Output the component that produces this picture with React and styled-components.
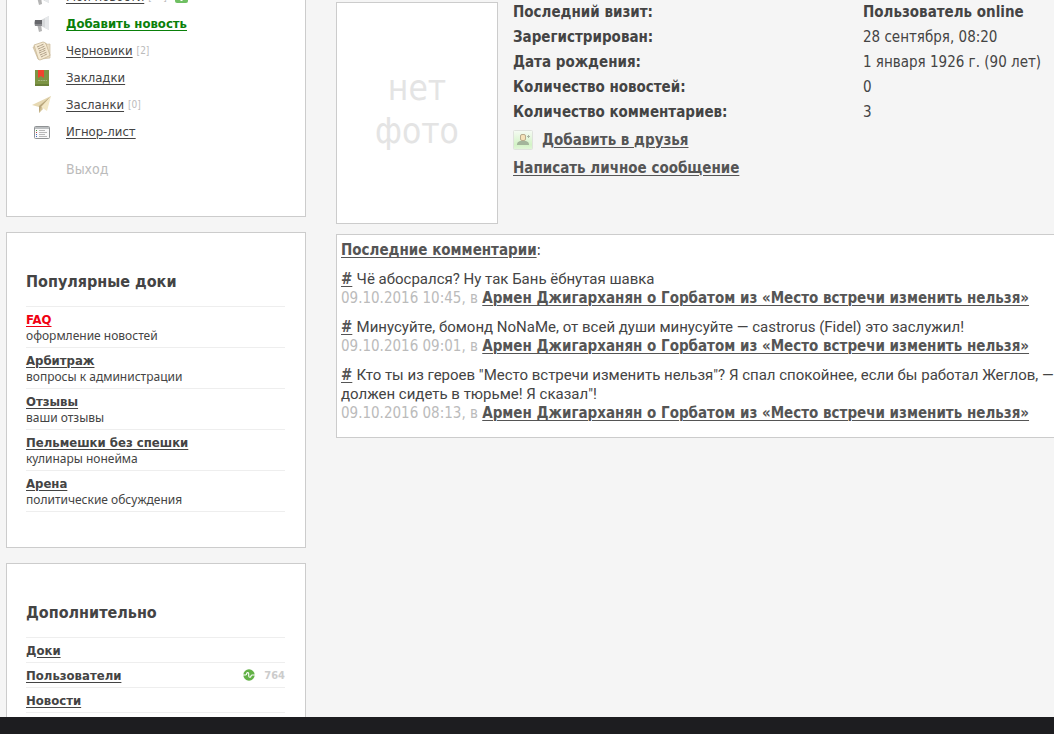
import styled, { createGlobalStyle } from "styled-components";

const menu = [
  { icon: <MegaphoneIcon />, name: "Мои новости", count: 30, plus: true },
  { icon: <MegaphoneIcon />, name: "Добавить новость", accent: true },
  { icon: <DraftsIcon />, name: "Черновики", count: 2 },
  { icon: <BookmarkIcon />, name: "Закладки" },
  { icon: <PlaneIcon />, name: "Засланки", count: 0 },
  { icon: <ListIcon />, name: "Игнор-лист" },
];

const docs = [
  { name: "FAQ", text: "оформление новостей", hot: true },
  { name: "Арбитраж", text: "вопросы к администрации" },
  { name: "Отзывы", text: "ваши отзывы" },
  { name: "Пельмешки без спешки", text: "кулинары нонейма" },
  { name: "Арена", text: "политические обсуждения" },
];

const extra = [
  { name: "Доки" },
  { name: "Пользователи", online: 764 },
  { name: "Новости" },
];

const profile = [
  ["Последний визит:", <b>Пользователь online</b>],
  ["Зарегистрирован:", "28 сентября, 08:20"],
  ["Дата рождения:", "1 января 1926 г. (90 лет)"],
  ["Количество новостей:", "0"],
  ["Количество комментариев:", "3"],
];

const topic = "Армен Джигарханян о Горбатом из «Место встречи изменить нельзя»";

const comments = [
  { date: "09.10.2016 10:45", lines: ["Чё абосрался? Ну так Бань ёбнутая шавка"] },
  {
    date: "09.10.2016 09:01",
    lines: ["Минусуйте, бомонд NoNaMe, от всей души минусуйте — castrorus (Fidel) это заслужил!"],
  },
  {
    date: "09.10.2016 08:13",
    lines: [
      'Кто ты из героев "Место встречи изменить нельзя"? Я спал спокойнее, если бы работал Жеглов, —',
      'должен сидеть в тюрьме! Я сказал"!',
    ],
  },
];

export default function App() {
  return (
    <>
      <GlobalStyle />
      <Page>
        <Content>
          <Sidebar>
            <UserCard>
              {menu.map((item) => (
                <MenuItem key={item.name}>
                  <MenuIcon>{item.icon}</MenuIcon>
                  <MenuLink href="#" $accent={item.accent}>
                    {item.name}
                  </MenuLink>
                  {item.count !== undefined && <Count>[{item.count}]</Count>}
                  {item.plus && <PlusIcon />}
                </MenuItem>
              ))}
              <Logout href="#">Выход</Logout>
            </UserCard>

            <Card>
              <CardTitle>Популярные доки</CardTitle>
              <List>
                {docs.map((doc) => (
                  <DocItem key={doc.name}>
                    <ListLink href="#" $hot={doc.hot}>
                      {doc.name}
                    </ListLink>
                    <DocText>{doc.text}</DocText>
                  </DocItem>
                ))}
              </List>
            </Card>

            <Card>
              <CardTitle>Дополнительно</CardTitle>
              <List>
                {extra.map((item) => (
                  <ExtraItem key={item.name}>
                    <ListLink href="#">{item.name}</ListLink>
                    {item.online && (
                      <Online>
                        <PulseIcon />
                        {item.online}
                      </Online>
                    )}
                  </ExtraItem>
                ))}
              </List>
            </Card>
          </Sidebar>

          <Main>
            <Profile>
              <NoPhoto>
                нет
                <br />
                фото
              </NoPhoto>
              <Info>
                <ProfileTable>
                  <tbody>
                    {profile.map(([label, value]) => (
                      <tr key={label}>
                        <th scope="row">{label}</th>
                        <td>{value}</td>
                      </tr>
                    ))}
                  </tbody>
                </ProfileTable>
                <Action>
                  <FriendIcon />
                  <BoldLink href="#">Добавить в друзья</BoldLink>
                </Action>
                <Action>
                  <BoldLink href="#">Написать личное сообщение</BoldLink>
                </Action>
              </Info>
            </Profile>

            <Comments>
              <CommentsTitle>
                <BoldLink href="#">Последние комментарии</BoldLink>:
              </CommentsTitle>
              {comments.map((comment) => (
                <Comment key={comment.date}>
                  <BoldLink href="#">#</BoldLink>{" "}
                  {comment.lines.map((line) => (
                    <CommentText key={line}>
                      {line}
                      <br />
                    </CommentText>
                  ))}
                  <Meta>{comment.date}, в </Meta>
                  <BoldLink href="#">{topic}</BoldLink>
                </Comment>
              ))}
            </Comments>
          </Main>
        </Content>
        <Footer />
      </Page>
    </>
  );
}

function MegaphoneIcon() {
  return (
    <svg width="18" height="18" viewBox="0 0 18 18">
      <path d="M4 9h4l1 7-3 1z" fill="#b4b4b4" />
      <path d="M8 5l8-4v14l-8-4z" fill="#d6d8da" />
      <path d="M12 3l4-2v14l-4-2z" fill="#e6e8ea" />
      <path d="M2 5h7v6H2q-1-3 0-6z" fill="#66676b" />
      <path d="M2 9h7v2H2z" fill="#88898d" />
    </svg>
  );
}

function DraftsIcon() {
  return (
    <svg width="20" height="20" viewBox="0 0 20 20">
      <path d="M1 6l13-4 4 13-12 3z" fill="#e8d9bd" stroke="#c8b797" strokeWidth=".7" />
      <path d="M6 4l12-1v14l-9 1z" fill="#eadcc2" stroke="#cdbd9e" strokeWidth=".7" />
      <path d="M2 4l9-3q2 0 3 2l4 11q-1 1-3 2l-7 3q-2 0-2-2z" fill="#f4e9d2" stroke="#c2b08e" strokeWidth=".7" />
      <path
        d="M5 6l7-3M6 8l7-3M7 10l7-3M7 12l7-3M8 14l7-3M9 16l6-3"
        stroke="#9a8970"
        strokeWidth=".8"
        strokeDasharray="3 .6"
      />
    </svg>
  );
}

function BookmarkIcon() {
  return (
    <svg width="18" height="18" viewBox="0 0 18 18">
      <path d="M2 1h14v14H2z" fill="#7c9444" />
      <path d="M2 15h14v2H2z" fill="#6a8038" />
      <path d="M5 1h6v8L8 7 5 9z" fill="#f0432e" />
      <path d="M5 11.500h9" stroke="#a8b882" strokeDasharray="2 .6" />
    </svg>
  );
}

function PlaneIcon() {
  return (
    <svg width="20" height="20" viewBox="0 0 20 20">
      <path d="M0 10L19 1 7 12z" fill="#e6d8b2" />
      <path d="M7 11L19 1 7 18z" fill="#b9a67c" />
      <path d="M9 12L19 1l-4 15z" fill="#f3e8c6" />
      <path d="M7 18l2-6 2 2z" fill="#d3c397" />
    </svg>
  );
}

function ListIcon() {
  return (
    <svg width="18" height="18" viewBox="0 0 18 18">
      <rect x="1.500" y="3.500" width="15" height="12" rx="1" fill="#fafafa" stroke="#8f9294" />
      <path d="M2 4h14v2H2z" fill="#bcbfc1" />
      <path d="M3 7.500h1" stroke="#3c9a3c" />
      <path d="M3 9.500h1" stroke="#c23c3c" />
      <path d="M3 11.500h1M3 13.500h1" stroke="#3c6ac2" />
      <path d="M6 7.500h6M6 9.500h8M6 11.500h6M6 13.500h8" stroke="#b8b8b8" />
    </svg>
  );
}

function PlusIcon() {
  return (
    <svg width="13" height="13" viewBox="0 0 13 13">
      <rect width="13" height="13" rx="2" fill="#6fbf62" />
      <path d="M6.500 3v8M3 6.500h7" stroke="#fff" strokeWidth="2" />
    </svg>
  );
}

function PulseIcon() {
  return (
    <svg width="12" height="12" viewBox="0 0 12 12">
      <circle cx="6" cy="6" r="5.700" fill="#62b146" />
      <path
        d="M0 6h2.600q1 0 1-1.200t1.100-1.200 1 1.200v2q0 1.400 1.100 1.400T8 7.100 9 6h3"
        fill="none"
        stroke="#fff"
        strokeWidth="1.100"
      />
    </svg>
  );
}

function FriendIcon() {
  return (
    <svg width="20" height="20" viewBox="0 0 20 20">
      <defs>
        <linearGradient id="friend" x1="0" y1="0" x2="0" y2="1">
          <stop offset="0" stopColor="#f6fbf4" />
          <stop offset=".75" stopColor="#d3f3c6" />
          <stop offset="1" stopColor="#e2f5da" />
        </linearGradient>
      </defs>
      <rect x=".5" y=".5" width="19" height="19" rx="1" fill="url(#friend)" stroke="#dfe2dd" />
      <path d="M4 15v-1q0-2 3-3h6q3 1 3 3v1z" fill="#a3b59b" />
      <rect x="7.500" y="4.500" width="5" height="6" rx="1.500" fill="#f5e2b8" stroke="#b7aa8c" />
      <path d="M15.500 5v3M14 6.500h3" stroke="#a9b5a3" />
    </svg>
  );
}

const GlobalStyle = createGlobalStyle`
  * {
    box-sizing: border-box;
  }

  body {
    margin: 0;
    color: #444;
    background-color: #f5f5f5;
    font-family: "DejaVu Sans Condensed", "DejaVu Sans", sans-serif;
    font-size: 15px;
    line-height: 19px;
  }

  a {
    color: inherit;
    text-decoration-thickness: 1px;
    text-underline-offset: 2px;
  }

  svg {
    display: block;
    flex-shrink: 0;
  }
`;

const Page = styled.div`
  display: flex;
  flex-direction: column;
  height: 100vh;
`;

const Content = styled.div`
  flex: 1;
  min-height: 0;
  display: flex;
  gap: 30px;
  padding-left: 6px;
  overflow: hidden;
`;

const Sidebar = styled.aside`
  flex: 0 0 300px;
  display: flex;
  flex-direction: column;
  gap: 15px;
`;

const Card = styled.section`
  flex-shrink: 0;
  padding: 39px 20px 35px 19px;
  background-color: #fff;
  border: 1px solid #ccc;
`;

/* scrolled a little: the first row is cut by the window edge */
const UserCard = styled(Card)`
  margin-top: -18px;
  padding-top: 0;
`;

const MenuItem = styled.div`
  display: flex;
  align-items: center;
  height: 27px;
`;

const MenuIcon = styled.span`
  width: 32px;
  margin-right: 8px;
  display: flex;
  justify-content: center;
`;

const MenuLink = styled.a`
  font-size: 13px;
  font-weight: ${(p) => (p.$accent ? 700 : 400)};
  color: ${(p) => (p.$accent ? "#0a800a" : "#444")};
`;

const Count = styled.span`
  margin: 0 8px 0 4px;
  font-size: 10px;
  color: #bbb;
`;

const Logout = styled.a`
  display: block;
  margin: 15px 0 2px 40px;
  font-size: 14px;
  color: #bbb;
  text-decoration: none;
`;

const CardTitle = styled.h3`
  margin: 0 0 15px;
  font-size: 16px;
  line-height: 19px;
`;

const List = styled.ul`
  margin: 0;
  padding: 0;
  list-style: none;
  border-top: 1px solid #eee;
`;

const DocItem = styled.li`
  height: 41px;
  padding-top: 4px;
  border-bottom: 1px solid #eee;
  line-height: 16px;
`;

const DocText = styled.div`
  font-family: "Noto Sans", sans-serif;
  font-size: 12px;
`;

const ExtraItem = styled.li`
  display: flex;
  align-items: center;
  justify-content: space-between;
  height: 25px;
  border-bottom: 1px solid #eee;
`;

const ListLink = styled.a`
  font-size: 13px;
  font-weight: 700;
  color: ${(p) => (p.$hot ? "#f00012" : "#444")};
`;

const Online = styled.span`
  display: flex;
  align-items: center;
  gap: 9px;
  font-size: 11px;
  font-weight: 700;
  color: #ccc;
`;

const Main = styled.main`
  flex: 1;
  min-width: 0;
  padding-top: 2px;
`;

const Profile = styled.section`
  display: flex;
  gap: 15px;
`;

const NoPhoto = styled.div`
  width: 162px;
  height: 222px;
  padding-top: 64px;
  border: 1px solid #ccc;
  background-color: #fff;
  color: #e4e4e4;
  font-size: 35px;
  line-height: 43px;
  text-align: center;
`;

const Info = styled.div`
  flex: 1;
`;

const ProfileTable = styled.table`
  width: 100%;
  margin: -2px 0 1px;
  border-collapse: collapse;

  th,
  td {
    height: 25px;
    padding: 0;
    text-align: left;
    white-space: nowrap;
  }

  th {
    width: 350px;
  }
`;

const Action = styled.div`
  display: flex;
  align-items: center;
  gap: 9px;
  height: 28px;
`;

const BoldLink = styled.a`
  font-weight: 700;
  color: #555;
`;

const Comments = styled.section`
  margin-top: 10px;
  padding: 6px 0 14px 4px;
  border: 1px solid #ccc;
  border-right: 0;
  background-color: #fff;
  white-space: nowrap;
`;

const CommentsTitle = styled.div`
  margin-bottom: 10px;
`;

const Comment = styled.div`
  margin-bottom: 10px;

  &:last-child {
    margin-bottom: 0;
  }
`;

const CommentText = styled.span`
  font-family: Roboto, sans-serif;
`;

const Meta = styled.span`
  color: #bbb;
`;

const Footer = styled.footer`
  flex: 0 0 17px;
  background-color: #1d1d20;
`;
